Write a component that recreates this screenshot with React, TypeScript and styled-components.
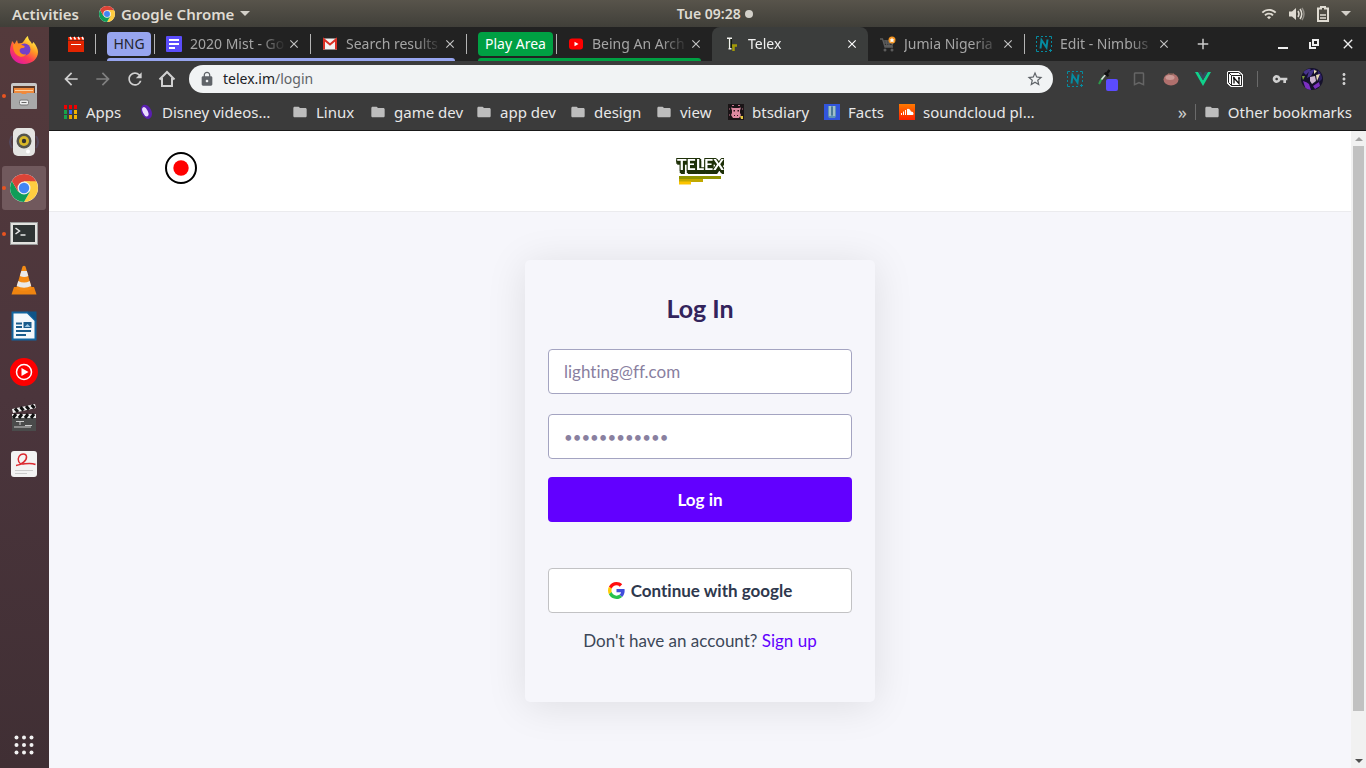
import React from "react";
import styled, { createGlobalStyle, css } from "styled-components";
import {
  MdArrowBack,
  MdArrowForward,
  MdRefresh,
  MdLock,
  MdStarBorder,
  MdFolder,
  MdVpnKey,
  MdMoreVert,
  MdBookmarkBorder,
  MdClose,
  MdAdd,
  MdWifi,
} from "react-icons/md";

const uiFont = `"Noto Sans", "Open Sans", sans-serif`;
const pageFont = `Lato, "Open Sans", sans-serif`;

const GlobalStyle = createGlobalStyle`
  *, *::before, *::after { box-sizing: border-box; }
  body { margin: 0; font-family: ${uiFont}; }
  button { border: 0; background: none; padding: 0; font: inherit; color: inherit; cursor: pointer; }
  a { text-decoration: none; color: inherit; }
  svg { display: block; flex: none; }
`;

/* ---------- desktop shell ---------- */

const Desktop = styled.div`
  display: flex;
  flex-direction: column;
  height: 100vh;
  overflow: hidden;
`;

const TopBar = styled.header`
  display: grid;
  grid-template-columns: 10fr auto 9fr;
  align-items: center;
  height: 27px;
  flex: none;
  padding: 0 15px 0 12px;
  background: linear-gradient(#58544b, #403f39);
  color: #dfdbd2;
  font-size: 15px;
  font-weight: 600;
`;

const TopGroup = styled.div<{ $end?: boolean; $gap: number }>`
  display: flex;
  align-items: center;
  gap: ${(p) => p.$gap}px;
  justify-content: ${(p) => (p.$end ? "flex-end" : "flex-start")};
`;

const TopButton = styled.button`
  display: flex;
  align-items: center;
  gap: 6px;
  line-height: 20px;
`;

const Clock = styled.time`
  display: flex;
  align-items: center;
  gap: 4px;
  font-size: 14px;
  line-height: 20px;
  &::after {
    content: "";
    width: 8px;
    height: 8px;
    border-radius: 50%;
    background: #d3d0c9;
  }
`;

const Workspace = styled.div`
  display: flex;
  flex: 1;
  min-height: 0;
`;

const Dock = styled.nav`
  display: flex;
  flex-direction: column;
  gap: 2px;
  width: 49px;
  flex: none;
  padding: 1px 3px 1px 2px;
  background: linear-gradient(#543a3c, #4b353c 50%, #402f34);
`;

const DockItem = styled.button<{ $active?: boolean; $running?: boolean; $last?: boolean }>`
  position: relative;
  display: flex;
  align-items: center;
  justify-content: center;
  height: 44px;
  border-radius: 3px;
  ${(p) => p.$active && css`background: #71595d;`}
  ${(p) => p.$last && css`margin-top: auto;`}
  ${(p) =>
    p.$running &&
    css`
      &::before {
        content: "";
        position: absolute;
        left: 0;
        top: 20px;
        width: 4px;
        height: 4px;
        border-radius: 50%;
        background: #e95420;
      }
    `}
`;

/* ---------- browser chrome ---------- */

const Browser = styled.main`
  display: flex;
  flex-direction: column;
  flex: 1;
  min-width: 0;
`;

const TabStrip = styled.div`
  display: flex;
  height: 34px;
  flex: none;
  padding: 0 10px 0 8px;
  background: #222222;
  color: #a5a5a5;
  font-size: 14px;
`;

const Separator = styled.span<{ $height: number; $color: string }>`
  width: 1px;
  height: ${(p) => p.$height}px;
  flex: none;
  align-self: center;
  background: ${(p) => p.$color};
`;

const PinnedTab = styled.button`
  display: flex;
  align-items: center;
  padding: 0 11px;
`;

const TabGroup = styled.div<{ $color: string }>`
  position: relative;
  display: flex;
  margin-left: 11px;
  &::after {
    content: "";
    position: absolute;
    left: 0;
    right: 11px;
    bottom: 0;
    height: 3px;
    border-radius: 3px 3px 0 0;
    background: ${(p) => p.$color};
  }
`;

const GroupChip = styled.button<{ $color: string; $text: string; $width: number }>`
  align-self: center;
  width: ${(p) => p.$width}px;
  height: 24px;
  flex: none;
  margin-right: 3px;
  border-radius: 4px;
  background: ${(p) => p.$color};
  color: ${(p) => p.$text};
  line-height: 24px;
  white-space: nowrap;
`;

const TabBox = styled.div<{ $active?: boolean; $divided?: boolean }>`
  position: relative;
  display: flex;
  align-items: center;
  flex: 0 1 156px;
  width: 156px;
  min-width: 0;
  padding: 0 11px 0 12px;
  ${(p) =>
    p.$divided &&
    css`
      &::before {
        content: "";
        position: absolute;
        left: 0;
        top: 7px;
        height: 20px;
        width: 1px;
        background: #b4b4b4;
      }
    `}
  ${(p) =>
    p.$active &&
    css`
      background: #3b3d3c;
      border-radius: 8px 8px 0 0;
      color: #f1f1f1;
      padding-left: 14px;
    `}
`;

const TabTitle = styled.button`
  flex: 1;
  min-width: 0;
  margin: 0 3px 0 8px;
  overflow: hidden;
  text-align: left;
  white-space: nowrap;
  line-height: 20px;
  mask-image: linear-gradient(to right, #000 72%, transparent);
`;

const CloseButton = styled.button<{ $bright?: boolean }>`
  display: flex;
  align-items: center;
  justify-content: center;
  width: 10px;
  flex: none;
  color: ${(p) => (p.$bright ? "#ffffff" : "#c4c4c4")};
`;

const NewTab = styled.button`
  padding: 0 14px;
  color: #cccccc;
`;

const WindowControls = styled.div`
  display: flex;
  align-items: center;
  gap: 21px;
  margin-left: auto;
  color: #eeeeee;
`;

const Toolbar = styled.div`
  display: flex;
  align-items: center;
  height: 36px;
  flex: none;
  padding: 0 6px;
  background: #3b3b3b;
  color: #d0d0d0;
`;

const ToolButton = styled.button<{ $dim?: boolean }>`
  display: flex;
  align-items: center;
  justify-content: center;
  width: 32px;
  height: 32px;
  flex: none;
  color: ${(p) => (p.$dim ? "#808080" : "inherit")};
`;

const Omnibox = styled.form`
  display: flex;
  align-items: center;
  flex: 1;
  min-width: 0;
  height: 28px;
  margin: 0 6px;
  padding: 0 9px 0 10px;
  border-radius: 14px;
  background: #f1f3f4;
  color: #5f6368;
`;

const Address = styled.label`
  position: relative;
  display: flex;
  align-items: center;
  flex: 1;
  min-width: 0;
  margin-left: 8px;
  font-size: 14px;
  line-height: 20px;
`;

const AddressInput = styled.input`
  position: absolute;
  inset: 0;
  width: 100%;
  border: 0;
  outline: 0;
  background: transparent;
`;

const Host = styled.span`
  color: #202124;
`;

const DividerCell = styled.span`
  display: flex;
  justify-content: center;
  width: 13px;
  flex: none;
`;

const Bookmarks = styled.nav`
  display: flex;
  align-items: center;
  height: 34px;
  flex: none;
  padding: 0 14px 4px 13px;
  border-bottom: 1px solid #191919;
  background: #3b3b3b;
  color: #e8e8e8;
  font-size: 15px;
`;

const Bookmark = styled.a<{ $width?: number }>`
  display: flex;
  align-items: center;
  gap: 8px;
  flex: none;
  ${(p) => p.$width && css`width: ${p.$width}px;`}
  line-height: 20px;
  white-space: nowrap;
`;

const BookmarksEnd = styled.div`
  display: flex;
  align-items: center;
  gap: 8px;
  margin-left: auto;
`;

const Overflow = styled.button`
  font-size: 18px;
  line-height: 20px;
  color: #cccccc;
`;

/* ---------- web page ---------- */

const Viewport = styled.div`
  display: flex;
  flex: 1;
  min-height: 0;
`;

const Page = styled.div`
  flex: 1;
  min-width: 0;
  overflow: hidden;
  background: #f6f6fb;
  font-family: ${pageFont};
  font-variant-ligatures: none;
`;

const SiteHeader = styled.header`
  display: grid;
  grid-template-columns: 1fr auto 1fr;
  align-items: start;
  height: 81px;
  padding: 21px 116px 0;
  border-bottom: 1px solid #ebebee;
  background: #ffffff;
`;

const LogoText = styled.text`
  font: 700 16px ${pageFont};
  fill: #ffffff;
  stroke: #1e3008;
  stroke-width: 2px;
  paint-order: stroke;
  filter: drop-shadow(1px 1px 0 #1e3008) drop-shadow(0 2px 0 #1e3008);
`;

const Card = styled.form`
  display: flex;
  flex-direction: column;
  width: 350px;
  max-width: 100%;
  margin: 48px auto;
  padding: 32px 23px 49px;
  border-radius: 5px;
  background: #f6f6fb;
  box-shadow: 0 4px 40px rgba(0, 0, 0, 0.1);
`;

const Title = styled.h1`
  margin: 0 0 25px;
  color: #33245c;
  font-size: 25px;
  font-weight: 700;
  line-height: 32px;
  text-align: center;
`;

const Field = styled.input<{ $secret?: boolean }>`
  width: 100%;
  height: 45px;
  margin-bottom: 20px;
  padding: 0 15px;
  border: 1px solid #a4a4c1;
  border-radius: 4px;
  background: #ffffff;
  font: 17px/24px ${pageFont};
  font-variant-ligatures: none;
  color: #33245c;
  &::placeholder {
    color: #89809f;
    font-size: ${(p) => (p.$secret ? 15 : 17)}px;
    opacity: 1;
  }
`;

const Action = styled.button<{ $primary?: boolean }>`
  display: flex;
  align-items: center;
  justify-content: center;
  gap: 6px;
  height: 45px;
  border-radius: 4px;
  font-size: 17px;
  font-weight: 700;
  line-height: 24px;
  ${(p) =>
    p.$primary
      ? css`
          margin: -2px 0 46px;
          background: #6200ff;
          color: #ffffff;
        `
      : css`
          border: 1px solid #c2c2c4;
          background: #ffffff;
          color: #2e384d;
        `}
`;

const SignUp = styled.p`
  margin: 16px 0 0;
  color: #3c4758;
  font-size: 17px;
  line-height: 24px;
  text-align: center;
  a { color: #6200ff; }
`;

const Scrollbar = styled.div`
  display: flex;
  flex-direction: column;
  width: 15px;
  flex: none;
  background: #f1f1f1;
`;

const ScrollArrow = styled.button<{ $dim?: boolean }>`
  display: flex;
  align-items: center;
  justify-content: center;
  height: 15px;
  flex: none;
  color: ${(p) => (p.$dim ? "#a3a3a3" : "#505050")};
`;

const ScrollTrack = styled.div`
  flex: 1;
  padding: 0 2px;
`;

const ScrollThumb = styled.div`
  height: 93%;
  background: #c1c1c1;
`;

/* ---------- icons ---------- */

const ChromeIcon = ({ size }: { size: number }) => (
  <svg width={size} height={size} viewBox="0 0 28 28">
    <circle cx="14" cy="14" r="14" fill="#fff" />
    <path d="M26.100 7A14 14 0 0 1 14 28L20 17.500 20 10.500V7Z" fill="#ffcd40" />
    <path d="M1.900 7A14 14 0 0 0 14 28L20 17.500 8 17.500Z" fill="#0f9d58" />
    <path d="M1.900 7 8 17.500 14 14 14 7.500 26.400 7.500A14 14 0 0 0 1.900 7Z" fill="#db4437" />
    <path d="M14 7.500h12.400L14 14Z" fill="#ffcd40" />
    <path d="M14 7.500h6v3Z" fill="#ffcd40" />
    <circle cx="14" cy="14" r="6.500" fill="#f1f1f1" />
    <circle cx="14" cy="14" r="5.200" fill="#4285f4" />
  </svg>
);

const FirefoxIcon = () => (
  <svg width="30" height="30" viewBox="0 0 30 30">
    <defs>
      <linearGradient id="fx" x1="0.800" y1="0.100" x2="0.250" y2="0.950">
        <stop offset="0" stopColor="#fff14a" />
        <stop offset="0.350" stopColor="#ff9a22" />
        <stop offset="0.650" stopColor="#ff4050" />
        <stop offset="1" stopColor="#e01aa0" />
      </linearGradient>
    </defs>
    <path d="M1 15C1 11 3 8 3 6c1 1 2 2 2.500 3L8 5l1 3.500 4-.5C15 7 16 3 19 1c0 4 3 5 4 8l1.500-2c3 4 4.500 7 4.500 10 0 7-6 12-14 12S1 23 1 15Z" fill="url(#fx)" />
    <circle cx="15.500" cy="14.500" r="6" fill="#7440c8" />
    <path d="M4 10c3-2 7-1 9 0 3 1 4 2 1 3-3 0-4 2-3 4s4 3 6 2c-1 3-6 4-9 1-3-2-4-6-4-10Z" fill="#ff8a20" />
  </svg>
);

const FilesIcon = () => (
  <svg width="28" height="28" viewBox="0 0 28 28">
    <rect x="1" y="1" width="26" height="26" rx="2" fill="#c9c9c9" />
    <path d="M3 4h22v8H3z" fill="#5e3a28" />
    <path d="M4 6h20v6H4z" fill="#f08a3c" />
    <path d="M5 8h18v1H5z" fill="#fbd0a0" />
    <path d="M1 11h10l1 1h4l1-1h10v15a1 1 0 0 1-1 1H2a1 1 0 0 1-1-1Z" fill="#a9a9a9" />
    <rect x="9.500" y="18" width="9" height="5" rx="1.500" fill="#eee" stroke="#777" />
    <path d="M11.500 20.500h5" stroke="#666" />
  </svg>
);

const SpeakerIcon = () => (
  <svg width="30" height="28" viewBox="0 0 30 28">
    <path d="M3 8Q-1 14 3 20M27 8q4 6 0 12" stroke="#54485c" strokeWidth="2" fill="none" />
    <rect x="4" y="0" width="22" height="28" rx="5" fill="#e4e4e2" />
    <circle cx="15" cy="13" r="7.500" fill="#55554c" />
    <circle cx="15" cy="13" r="5" fill="#d8b828" />
    <circle cx="15" cy="13" r="2.200" fill="#333" />
    <circle cx="19" cy="23.500" r="2" fill="#fff" />
  </svg>
);

const TerminalIcon = () => (
  <svg width="28" height="24" viewBox="0 0 28 24">
    <rect x="0.500" y="0.500" width="27" height="22" fill="#e2e2df" stroke="#999" />
    <rect x="3" y="3" width="22" height="17" fill="#2f3434" />
    <path d="m5.500 6 4 3-4 3M10.500 13h5" stroke="#e8e8e8" strokeWidth="1.500" fill="none" />
  </svg>
);

const VlcIcon = () => (
  <svg width="26" height="30" viewBox="0 0 26 30">
    <path d="M3 22h20l2.500 7.500H.5Z" fill="#ee8410" />
    <path d="M11.500 1.500q1.500-1.500 3 0L21 24q-8 4-16 0Z" fill="#f48b15" />
    <path d="m10.300 6 5.600 0 1.400 5q-4 2-8.400 0ZM7.200 16q6 3 11.500 0l1.500 5q-7 3.500-14.500 0Z" fill="#e9e9e9" />
  </svg>
);

const WriterIcon = () => (
  <svg width="26" height="30" viewBox="0 0 26 30">
    <path d="M1.500 1.500h15l8 8v19h-23Z" fill="#f4f8fb" stroke="#12659f" strokeWidth="2" />
    <path d="M16 .5h9.500v10Z" fill="#0f5488" />
    <path d="M5 12.500h6M5 16h6M5 20h15M5 24h10" stroke="#1a5c8c" strokeWidth="2" />
    <rect x="12.500" y="11" width="8" height="6" fill="#1a5c8c" />
    <path d="m13.500 16 3-3 3 3Z" fill="#9bc7e4" />
  </svg>
);

const PlayIcon = () => (
  <svg width="28" height="28" viewBox="0 0 28 28">
    <circle cx="14" cy="14" r="14" fill="#fe0000" />
    <circle cx="14" cy="14" r="7.500" fill="none" stroke="#fff" strokeWidth="1.500" />
    <path d="m11.500 10 7 4-7 4Z" fill="#fff" />
  </svg>
);

const ClapperIcon = () => (
  <svg width="26" height="28" viewBox="0 0 26 28">
    <path d="m1 5 23-5 1 4L2 9Z" fill="#eee" />
    <path d="m4 4.500 3 3.500M9.500 3l3 3.500M15 2l3 3.500M20.500 1l3 3" stroke="#111" strokeWidth="3" />
    <path d="M1 10h24v17H1Z" fill="#4a4b4b" />
    <path d="M1 10h24v4H1Z" fill="#eee" />
    <path d="m5 10-3 4M11 10l-3 4M17 10l-3 4M23 10l-3 4" stroke="#111" strokeWidth="3" />
    <path d="M5 17.500h8M9 17v4M3 23h17M14 21.500h7" stroke="#ccc" />
  </svg>
);

const ViewerIcon = () => (
  <svg width="26" height="26" viewBox="0 0 26 26">
    <rect width="26" height="26" rx="3" fill="#f3f3f3" />
    <path d="M5 14.500C11 14 16 9 15.500 5.500S10 2 8 5.500s0 8 4 7.500 8-1.500 12.500.5" fill="none" stroke="#dc2b32" strokeWidth="1.500" />
    <path d="M4 19.500h18M4 22.500h12" stroke="#ccc" />
  </svg>
);

const GridIcon = () => (
  <svg width="20" height="20" viewBox="0 0 20 20" fill="#f2f2f2">
    {[2.5, 10, 17.5].map((y) => [2.5, 10, 17.5].map((x) => <circle key={`${x}-${y}`} cx={x} cy={y} r="2" />))}
  </svg>
);

const CaretIcon = () => (
  <svg width="10" height="5" viewBox="0 0 10 5"><path d="M0 0h10L5 5Z" fill="#d3d0c9" /></svg>
);

const VolumeIcon = () => (
  <svg width="16" height="14" viewBox="0 0 16 14">
    <path d="M0 4.500h3L7 1v12L3 9.500H0Z" fill="#dfdbd2" />
    <path d="M9 4q2 3 0 6M11 2q3.500 5 0 10" fill="none" stroke="#dfdbd2" strokeWidth="1.500" />
    <path d="M13 1q4 6 0 12" fill="none" stroke="#8e8b84" strokeWidth="1.500" />
  </svg>
);

const BatteryIcon = () => (
  <svg width="12" height="16" viewBox="0 0 12 16">
    <path d="M4 1h4v1.500h3V15H1V2.500h3Z" fill="none" stroke="#dfdbd2" strokeWidth="2" />
    <path d="M3 9h6M3 12h6" stroke="#dfdbd2" strokeWidth="1.500" />
  </svg>
);

const FilmIcon = () => (
  <svg width="16" height="16" viewBox="0 0 16 16">
    <path d="M0 5h16v11H0Z" fill="#e22400" />
    <path d="M0 1h16v3.500H0Z" fill="#e22400" />
    <path d="m2 1 1.500 2.500M6 1l1.500 2.500M10 1l1.500 2.500M14 1l1.500 2.500" stroke="#fff" strokeWidth="1.500" />
    <path d="M3 8.500h10" stroke="#fff" />
  </svg>
);

const FormsIcon = () => (
  <svg width="16" height="16" viewBox="0 0 16 16">
    <rect width="16" height="16" rx="1" fill="#5b4dfb" />
    <path d="M3 4h10M3 8h10M3 12h6" stroke="#fff" strokeWidth="2" />
  </svg>
);

const GmailIcon = () => (
  <svg width="16" height="16" viewBox="0 0 16 16">
    <path d="M1 2.500h14v11H1Z" fill="#f2f2f2" />
    <path d="M2 13.500v-10l6 5 6-5v10" fill="none" stroke="#d93025" strokeWidth="2" />
  </svg>
);

const YoutubeIcon = () => (
  <svg width="16" height="16" viewBox="0 0 16 16">
    <rect x="1" y="2.500" width="14" height="11" rx="3" fill="#f00" />
    <path d="m6.500 5.800 4 2.200-4 2.200Z" fill="#fff" />
  </svg>
);

const TelexMark = () => (
  <svg width="14" height="16" viewBox="0 0 14 16">
    <path d="M4 2.500v10" stroke="#10180b" strokeWidth="4" />
    <path d="M1 2.200h5M3.500 2v11M2.500 12.800h3" stroke="#f3f3f0" strokeWidth="1.500" fill="none" />
    <path d="M6 9.500h5M7.500 9v6" stroke="#a39a08" strokeWidth="2.500" />
  </svg>
);

const CartIcon = () => (
  <svg width="16" height="16" viewBox="0 0 16 16">
    <path d="M0 3h2.500l2.500 8h8M3.500 5h10l-1.500 4.500H4.500M6 4l1 6M9 4v6M4 7h9" fill="none" stroke="#5c5c5c" strokeWidth="1.300" />
    <circle cx="5" cy="14" r="1.500" fill="#5c5c5c" />
    <circle cx="12" cy="14" r="1.500" fill="#5c5c5c" />
    <circle cx="12" cy="4" r="3.500" fill="#f7941d" />
    <path d="m12 1.500.8 1.700 1.800.2-1.300 1.200.4 1.900-1.700-1-1.700 1 .4-1.900-1.300-1.200 1.800-.2Z" fill="#fff" />
  </svg>
);

const NimbusIcon = () => (
  <svg width="16" height="16" viewBox="0 0 16 16" fill="none">
    <path d="M.5 3V.5H3M5 .5h2M9 .5h2M13 .5h2.500V3M15.500 5v2M15.500 9v2M.5 5v2M.5 9v2M.5 13v2.500H3M5 15.500h2M9 15.500h2M14.500 13v3M13 14.500h3" stroke="#058ba0" />
    <path d="M4.500 12.500 5.500 4l5 7.500 1-8" stroke="#058ba0" strokeWidth="2" />
  </svg>
);

const PickerIcon = () => (
  <svg width="22" height="24" viewBox="0 0 22 24">
    <path d="m3 17 2-4 3-4" fill="none" stroke="#2c9a48" strokeWidth="2" />
    <path d="m5.500 12.500 5-6" stroke="#ddd" strokeWidth="1.500" />
    <path d="m8.500 6 4 3M10.500 7l3-4" stroke="#111" strokeWidth="2.500" />
    <rect x="10" y="12" width="12" height="12" rx="2" fill="#5b4bff" />
  </svg>
);

const TomatoIcon = () => (
  <svg width="16" height="16" viewBox="0 0 16 16">
    <ellipse cx="8" cy="8.500" rx="7.500" ry="6" fill="#b0706d" />
    <ellipse cx="7" cy="6.500" rx="4.500" ry="2.500" fill="#cb9995" />
    <path d="M5 2.500q3 2 6 0" stroke="#7c6055" fill="none" />
  </svg>
);

const VueIcon = () => (
  <svg width="16" height="14" viewBox="0 0 16 14">
    <path d="M0 0h3.200L8 8.300 12.800 0H16L8 14Z" fill="#11d18b" />
    <path d="M3.200 0H6l2 3.500L10 0h2.800L8 8.300Z" fill="#35495e" />
  </svg>
);

const NotionIcon = () => (
  <svg width="16" height="16" viewBox="0 0 16 16">
    <path d="M1 .5h11l3.500 3v12H4l-3.500-3V1Z" fill="#fff" stroke="#fff" strokeLinejoin="round" />
    <path d="M1.500 1.500h10l3 2.500v10.500H4.500l-3-3Z M1.500 1.500l3 3h10M4.500 4.500v10" fill="none" stroke="#222" />
    <path d="M7 12.500V7l5 5.500V6.500M6 7h2M11 7h2" stroke="#111" strokeWidth="1.300" fill="none" />
  </svg>
);

const HomeIcon = () => (
  <svg width="18" height="18" viewBox="0 0 18 18">
    <path d="M1.500 9.500 9 2l7.500 7.500M4 8v8h10V8" fill="none" stroke="currentColor" strokeWidth="2" />
  </svg>
);

const Avatar = () => (
  <svg width="22" height="22" viewBox="0 0 22 22">
    <defs><clipPath id="face"><circle cx="11" cy="11" r="11" /></clipPath></defs>
    <g clipPath="url(#face)">
      <rect width="22" height="22" fill="#15112b" />
      <path d="M2 4q5-4 8-3L5 7ZM8 3l6-2-4 7-4 2Z" fill="#46348c" />
      <path d="M17 2q4 4 4 9l-3 3-1-6Z" fill="#2f2166" />
      <path d="m9 9 5-1 1 5-4 3-2-3Z" fill="#cdb5d2" />
      <path d="m15 7 4-1-3 7ZM13 2l3 1-3 3Z" fill="#e9dcb4" />
      <path d="M2 13q4 1 6 3l2 6H5ZM12 18l6-4 1 4-5 3Z" fill="#7b2fc0" />
      <path d="m1 8 3 0-2 4Z" fill="#7a9a38" />
    </g>
  </svg>
);

const appColors = ["#f00000", "#f00000", "#f00000", "#17a34a", "#4064f0", "#f2b100", "#17a34a", "#e8a200", "#f2b100"];
const AppsIcon = () => (
  <svg width="16" height="16" viewBox="0 0 16 16">
    {appColors.map((c, i) => (
      <rect key={i} x={2 + (i % 3) * 5} y={1 + Math.floor(i / 3) * 5} width="3" height="4" fill={c} />
    ))}
  </svg>
);

const DisneyIcon = () => (
  <svg width="16" height="16" viewBox="0 0 16 16">
    <ellipse cx="8.500" cy="8" rx="5" ry="7.500" transform="rotate(-25 8 8)" fill="#5a1fb0" />
    <ellipse cx="7.500" cy="7.500" rx="2.500" ry="5" transform="rotate(-25 8 8)" fill="#eadcff" />
  </svg>
);

const CowIcon = () => (
  <svg width="16" height="16" viewBox="0 0 16 16">
    <rect width="16" height="16" fill="#1a1416" />
    <path d="M3 3.500 5.500 4h5l2.500-.5-1 3V9l1 2-2 3H5l-2-3 1-2V6.500Z" fill="#dd8aa0" />
    <path d="M5.500 6H7v1.500H5.500ZM9.500 6H11v1.500H9.500ZM6 11h1v1H6ZM9 11h1v1H9Z" fill="#2a1418" />
    <path d="M1 5h1M14 5h1M1 11h1M4 1.500h2M10 1.500h2" stroke="#c7748b" />
    <path d="M12 12h3v3h-2Z" fill="#e5c540" />
  </svg>
);

const FactsIcon = () => (
  <svg width="16" height="16" viewBox="0 0 16 16">
    <rect width="16" height="16" fill="#3155dc" />
    <path d="M4 2h8v10l-1 2H5l-1-2Z" fill="#5f94b5" />
    <path d="M6 2v10M10 2v10" stroke="#b9cdd0" strokeWidth="1.500" />
    <path d="M8 3v8" stroke="#3b6078" />
  </svg>
);

const SoundcloudIcon = () => (
  <svg width="16" height="16" viewBox="0 0 16 16">
    <defs><linearGradient id="sc" x2="0" y2="1"><stop stopColor="#ff7a00" /><stop offset="1" stopColor="#ff2100" /></linearGradient></defs>
    <rect width="16" height="16" fill="url(#sc)" />
    <path d="M2.500 9v2M4.500 7.500V11M6.500 6v5" stroke="#fff" />
    <path d="M8 5q3-1 4 2.500 2.500 0 2.500 2T13 11H8Z" fill="#fff" />
  </svg>
);

const FolderIcon = () => <MdFolder size={16} color="#bdbdbd" />;

const GoogleIcon = () => (
  <svg width="17" height="17" viewBox="0 0 48 48">
    <path fill="#ff0e0e" d="M24 9.500c3.540 0 6.710 1.220 9.210 3.600l6.850-6.850C35.900 2.380 30.470 0 24 0 14.620 0 6.510 5.380 2.560 13.220l7.980 6.190C12.430 13.720 17.740 9.500 24 9.500z" />
    <path fill="#414ddb" d="M46.980 24.550c0-1.570-.15-3.090-.38-4.550H24v9.020h12.940c-.58 2.960-2.260 5.480-4.780 7.180l7.730 6c4.510-4.180 7.090-10.360 7.090-17.650z" />
    <path fill="#ffcb05" d="M10.530 28.590c-.48-1.450-.76-2.990-.76-4.590s.27-3.140.76-4.590l-7.980-6.190C.92 16.460 0 20.120 0 24c0 3.880.92 7.540 2.560 10.780l7.970-6.190z" />
    <path fill="#27c24c" d="M24 48c6.480 0 11.930-2.130 15.890-5.810l-7.730-6c-2.150 1.450-4.920 2.300-8.160 2.300-6.260 0-11.570-4.220-13.470-9.910l-7.980 6.190C6.510 42.620 14.620 48 24 48z" />
  </svg>
);

const RecordLogo = () => (
  <svg width="32" height="32" viewBox="0 0 32 32">
    <circle cx="16" cy="16" r="15" fill="#fff" stroke="#000" strokeWidth="2" />
    <circle cx="16" cy="16" r="7.700" fill="#f00" />
  </svg>
);

const TelexLogo = () => (
  <svg width="48" height="34" viewBox="0 0 48 34">
    <LogoText x="1" y="18">TELEX</LogoText>
    <path d="M3 25.500h42" stroke="#8f9400" strokeWidth="3" />
    <path d="M3 28.500h24" stroke="#c0a800" strokeWidth="3" />
    <path d="M3 31h12" stroke="#fcc400" strokeWidth="3" />
  </svg>
);

const RestoreIcon = () => (
  <svg width="10" height="10" viewBox="0 0 10 10" fill="none" stroke="currentColor" strokeWidth="2">
    <path d="M4 1h5v5H4Z M1 3v6h6" />
  </svg>
);

const MinimizeIcon = () => (
  <svg width="10" height="10" viewBox="0 0 10 10"><path d="M0 9h10" stroke="currentColor" strokeWidth="2" /></svg>
);

/* ---------- composition ---------- */

interface TabProps {
  icon: React.ReactNode;
  title: string;
  active?: boolean;
  divided?: boolean;
}

const Tab = ({ icon, title, active, divided }: TabProps) => (
  <TabBox $active={active} $divided={divided}>
    {icon}
    <TabTitle>{title}</TabTitle>
    <CloseButton $bright={active} aria-label={`Close ${title}`}><MdClose size={14} /></CloseButton>
  </TabBox>
);

const dockItems = [
  { name: "Firefox", icon: <FirefoxIcon /> },
  { name: "Files", icon: <FilesIcon />, running: true },
  { name: "Rhythmbox", icon: <SpeakerIcon /> },
  { name: "Google Chrome", icon: <ChromeIcon size={28} />, running: true, active: true },
  { name: "Terminal", icon: <TerminalIcon />, running: true },
  { name: "VLC", icon: <VlcIcon /> },
  { name: "Writer", icon: <WriterIcon /> },
  { name: "YouTube Music", icon: <PlayIcon /> },
  { name: "Video editor", icon: <ClapperIcon /> },
  { name: "Document viewer", icon: <ViewerIcon /> },
];

const bookmarks = [
  { name: "Apps", icon: <AppsIcon />, width: 76 },
  { name: "Disney videos…", icon: <DisneyIcon />, width: 154 },
  { name: "Linux", icon: <FolderIcon />, width: 78 },
  { name: "game dev", icon: <FolderIcon />, width: 106 },
  { name: "app dev", icon: <FolderIcon />, width: 94 },
  { name: "design", icon: <FolderIcon />, width: 86 },
  { name: "view", icon: <FolderIcon />, width: 72 },
  { name: "btsdiary", icon: <CowIcon />, width: 96 },
  { name: "Facts", icon: <FactsIcon />, width: 75 },
  { name: "soundcloud pl…", icon: <SoundcloudIcon />, width: 140 },
];

export default function App() {
  return (
    <Desktop>
      <GlobalStyle />
      <TopBar>
        <TopGroup $gap={20}>
          <TopButton>Activities</TopButton>
          <TopButton><ChromeIcon size={16} />Google Chrome<CaretIcon /></TopButton>
        </TopGroup>
        <Clock>Tue 09:28</Clock>
        <TopGroup $end $gap={12}>
          <MdWifi size={16} />
          <VolumeIcon />
          <BatteryIcon />
          <CaretIcon />
        </TopGroup>
      </TopBar>
      <Workspace>
        <Dock>
          {dockItems.map((d) => (
            <DockItem key={d.name} aria-label={d.name} $active={d.active} $running={d.running}>{d.icon}</DockItem>
          ))}
          <DockItem aria-label="Show applications" $last><GridIcon /></DockItem>
        </Dock>
        <Browser>
          <TabStrip>
            <PinnedTab aria-label="Pinned tab"><FilmIcon /></PinnedTab>
            <Separator $height={20} $color="#b4b4b4" />
            <TabGroup $color="#97a5ef">
              <GroupChip $color="#97a5ef" $text="#23252f" $width={44}>HNG</GroupChip>
              <Tab divided icon={<FormsIcon />} title="2020 Mist - Go" />
              <Tab divided icon={<GmailIcon />} title="Search results" />
            </TabGroup>
            <Separator $height={20} $color="#b4b4b4" />
            <TabGroup $color="#00a043">
              <GroupChip $color="#00a043" $text="#ffffff" $width={75}>Play Area</GroupChip>
              <Tab divided icon={<YoutubeIcon />} title="Being An Arch" />
            </TabGroup>
            <Tab active icon={<TelexMark />} title="Telex" />
            <Tab icon={<CartIcon />} title="Jumia Nigeria" />
            <Tab divided icon={<NimbusIcon />} title="Edit - Nimbus" />
            <NewTab aria-label="New tab"><MdAdd size={18} /></NewTab>
            <WindowControls>
              <button aria-label="Minimize"><MinimizeIcon /></button>
              <button aria-label="Restore"><RestoreIcon /></button>
              <button aria-label="Close window"><MdClose size={16} /></button>
            </WindowControls>
          </TabStrip>
          <Toolbar>
            <ToolButton aria-label="Back"><MdArrowBack size={20} /></ToolButton>
            <ToolButton aria-label="Forward" $dim><MdArrowForward size={20} /></ToolButton>
            <ToolButton aria-label="Reload"><MdRefresh size={20} /></ToolButton>
            <ToolButton aria-label="Home"><HomeIcon /></ToolButton>
            <Omnibox>
              <MdLock size={16} />
              <Address>
                <Host>telex.im</Host>/login
                <AddressInput aria-label="Address" />
              </Address>
              <MdStarBorder size={18} />
            </Omnibox>
            <ToolButton aria-label="Nimbus"><NimbusIcon /></ToolButton>
            <ToolButton aria-label="Color picker"><PickerIcon /></ToolButton>
            <ToolButton aria-label="Bookmark" $dim><MdBookmarkBorder size={18} color="#656565" /></ToolButton>
            <ToolButton aria-label="Tomato timer"><TomatoIcon /></ToolButton>
            <ToolButton aria-label="Vue devtools"><VueIcon /></ToolButton>
            <ToolButton aria-label="Notion"><NotionIcon /></ToolButton>
            <DividerCell><Separator $height={16} $color="#6a6a6a" /></DividerCell>
            <ToolButton aria-label="Passwords"><MdVpnKey size={16} /></ToolButton>
            <ToolButton aria-label="Profile"><Avatar /></ToolButton>
            <ToolButton aria-label="Menu"><MdMoreVert size={18} /></ToolButton>
          </Toolbar>
          <Bookmarks>
            {bookmarks.map((b) => (
              <Bookmark key={b.name} href="#" $width={b.width}>{b.icon}{b.name}</Bookmark>
            ))}
            <BookmarksEnd>
              <Overflow aria-label="More bookmarks">»</Overflow>
              <Separator $height={16} $color="#6a6a6a" />
              <Bookmark href="#"><FolderIcon />Other bookmarks</Bookmark>
            </BookmarksEnd>
          </Bookmarks>
          <Viewport>
            <Page>
              <SiteHeader>
                <RecordLogo />
                <TelexLogo />
              </SiteHeader>
              <Card>
                <Title>Log In</Title>
                <Field type="email" aria-label="Email" placeholder="lighting@ff.com" />
                <Field type="password" aria-label="Password" placeholder="••••••••••••" $secret />
                <Action type="submit" $primary>Log in</Action>
                <Action type="button"><GoogleIcon />Continue with google</Action>
                <SignUp>Don't have an account? <a href="#">Sign up</a></SignUp>
              </Card>
            </Page>
            <Scrollbar>
              <ScrollArrow aria-label="Scroll up" $dim>
                <svg width="8" height="4" viewBox="0 0 8 4"><path d="M4 0l4 4H0Z" fill="currentColor" /></svg>
              </ScrollArrow>
              <ScrollTrack><ScrollThumb /></ScrollTrack>
              <ScrollArrow aria-label="Scroll down">
                <svg width="8" height="4" viewBox="0 0 8 4"><path d="M0 0h8L4 4Z" fill="currentColor" /></svg>
              </ScrollArrow>
            </Scrollbar>
          </Viewport>
        </Browser>
      </Workspace>
    </Desktop>
  );
}
